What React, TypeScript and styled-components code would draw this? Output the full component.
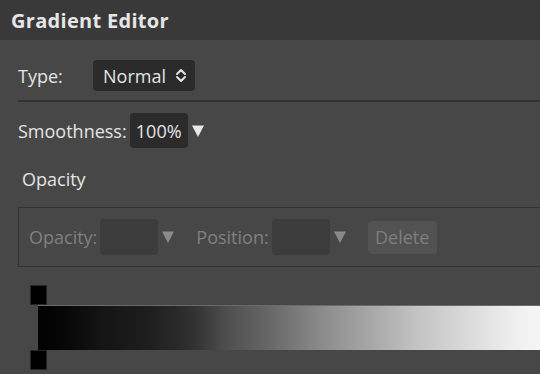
import React from "react";
import styled, { createGlobalStyle } from "styled-components";

const GlobalStyle = createGlobalStyle`
  html, body {
    margin: 0;
    padding: 0;
    background: #474747;
    overflow: hidden;
  }
  body {
    font-family: "Open Sans", "Noto Sans", sans-serif;
  }
`;

const Panel = styled.div`
  width: 560px;
  height: 374px;
  background: #474747;
  display: flex;
  flex-direction: column;
  color: #e4e4e4;
  font-size: 18px;
`;

const TitleBar = styled.div`
  height: 40px;
  flex: none;
  background: #393939;
  display: flex;
  align-items: center;
  padding-left: 11px;
  font-size: 20px;
  font-weight: 700;
  color: #e6e6e6;
  letter-spacing: 0.3px;
`;

const Body = styled.div`
  display: flex;
  flex-direction: column;
  padding-left: 18px;
`;

const TypeSection = styled.div`
  display: flex;
  align-items: center;
  margin-top: 20px;
  padding-bottom: 9px;
  border-bottom: 2px solid #323232;
`;

const Label = styled.span<{ $width?: number; $disabled?: boolean }>`
  display: inline-block;
  ${(p) => (p.$width ? `width: ${p.$width}px;` : "")}
  color: ${(p) => (p.$disabled ? "#808080" : "#e4e4e4")};
  line-height: 24px;
  white-space: nowrap;
`;

const Select = styled.div`
  height: 31px;
  box-sizing: border-box;
  width: 102px;
  background: #2b2b2b;
  border-radius: 4px;
  display: flex;
  align-items: center;
  padding-left: 10px;
  gap: 9px;
  color: #e4e4e4;
`;

const SmoothRow = styled.div`
  display: flex;
  align-items: center;
  margin-top: 11px;
`;

const ValueBox = styled.div<{ $disabled?: boolean }>`
  width: 58px;
  height: ${(p) => (p.$disabled ? 36 : 35)}px;
  box-sizing: border-box;
  border-radius: 4px;
  background: ${(p) => (p.$disabled ? "#3c3c3c" : "#2b2b2b")};
  color: #e4e4e4;
  display: flex;
  align-items: center;
  justify-content: center;
  margin-left: 3px;
`;

const Caret = styled.svg<{ $disabled?: boolean }>`
  width: 12px;
  height: 12px;
  margin-left: 4px;
  fill: ${(p) => (p.$disabled ? "#8a8a8a" : "#e8e8e8")};
  flex: none;
`;

const SectionHeading = styled.div`
  margin-top: 19px;
  margin-left: 4px;
  line-height: 24px;
  color: #e4e4e4;
`;

const StopFieldset = styled.div`
  margin-top: 16px;
  height: 60px;
  box-sizing: border-box;
  border: 1px solid #333333;
  display: flex;
  align-items: center;
  padding-left: 10px;
`;

const FieldGroup = styled.div`
  display: flex;
  align-items: center;
  margin-right: 22px;
`;

const DeleteButton = styled.button`
  height: 33px;
  width: 69px;
  border: none;
  border-radius: 4px;
  background: #525252;
  color: #7e7e7e;
  font-family: inherit;
  font-size: 18px;
  padding: 0;
`;

const GradientArea = styled.div`
  margin-top: 18px;
  margin-left: 20px;
  display: flex;
  flex-direction: column;
`;

const StopTrack = styled.div`
  position: relative;
  height: 20px;
`;

const StopMarker = styled.div`
  position: absolute;
  top: 0;
  width: 17px;
  height: 20px;
  box-sizing: border-box;
  background: #000;
  border: 1px solid #262626;
`;

const GradientBar = styled.div`
  height: 45px;
  box-sizing: border-box;
  border-top: 1px solid #6a6a6a;
  background: linear-gradient(
    to right,
    #020202 0%,
    #050505 4%,
    #141414 12%,
    #1e1e1e 21%,
    #2a2a2a 27%,
    #363636 31%,
    #4e4e4e 36%,
    #666666 44%,
    #8a8a8a 54%,
    #a8a8a8 64%,
    #c4c4c4 73%,
    #dcdcdc 83%,
    #f0f0f0 92%,
    #f5f5f5 96%,
    #f8f8f8 100%
  );
`;

const UpDownIcon = () => (
  <svg width="12" height="15" viewBox="0 0 12 15" fill="none" stroke="#e4e4e4" strokeWidth="2" strokeLinecap="round" strokeLinejoin="round">
    <polyline points="2,6 6,2 10,6" />
    <polyline points="2,9 6,13 10,9" />
  </svg>
);

const Triangle = ({ disabled }: { disabled?: boolean }) => (
  <Caret $disabled={disabled} viewBox="0 0 12 12">
    <polygon points="0,0.5 12,0.5 6,12" />
  </Caret>
);

const stops = [0];

export default function App() {
  return (
    <>
      <GlobalStyle />
      <Panel>
        <TitleBar>Gradient Editor</TitleBar>
        <Body>
          <TypeSection>
            <Label $width={75}>Type:</Label>
            <Select>
              <span>Normal</span>
              <UpDownIcon />
            </Select>
          </TypeSection>
          <SmoothRow>
            <Label>Smoothness:</Label>
            <ValueBox>100%</ValueBox>
            <Triangle />
          </SmoothRow>
          <SectionHeading>Opacity</SectionHeading>
          <StopFieldset>
            <FieldGroup>
              <Label $disabled>Opacity:</Label>
              <ValueBox $disabled />
              <Triangle disabled />
            </FieldGroup>
            <FieldGroup>
              <Label $disabled>Position:</Label>
              <ValueBox $disabled />
              <Triangle disabled />
            </FieldGroup>
            <DeleteButton disabled>Delete</DeleteButton>
          </StopFieldset>
          <GradientArea>
            <StopTrack>
              {stops.map((s) => (
                <StopMarker key={s} style={{ left: `calc(${s}% - 8px)` }} />
              ))}
            </StopTrack>
            <GradientBar />
            <StopTrack>
              {stops.map((s) => (
                <StopMarker key={s} style={{ left: `calc(${s}% - 8px)` }} />
              ))}
            </StopTrack>
          </GradientArea>
        </Body>
      </Panel>
    </>
  );
}
